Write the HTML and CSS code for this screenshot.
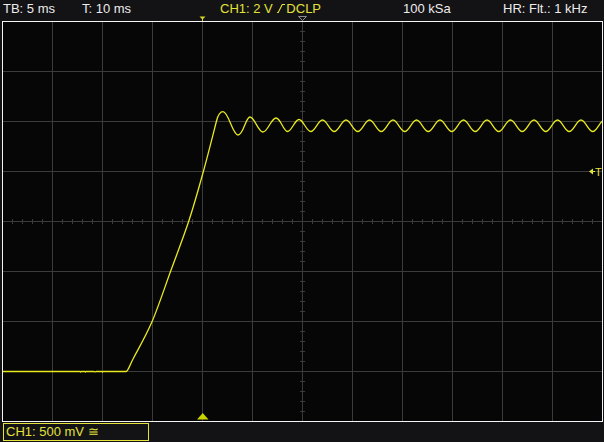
FILE: index.html
```html
<!DOCTYPE html>
<html lang="en">
<head>
<meta charset="utf-8">
<title>Scope</title>
<link rel="stylesheet" href="styles.css">
</head>
<body>
<div class="scope">
  <header class="status">
    <span class="field">TB: 5 ms</span>
    <span class="field">T: 10 ms</span>
    <span class="field ch">CH1: 2 V <svg class="edge" width="8" height="10" viewBox="0 0 8 10"><path d="M0 8.5H1.2L5.3 0.5H8" /></svg>DCLP</span>
    <span class="field">100 kSa</span>
    <span class="field">HR: Flt.: 1 kHz</span>
    <svg class="markers" width="604" height="8" viewBox="0 14 604 8">
      <path class="trig-pos" d="M199.5 16.5H205.5L202.5 19.5Z M202 19h1v2h-1Z" />
      <path class="ref-pos" d="M298.5 16.5H306.5L302.5 20.5Z" />
    </svg>
  </header>

  <svg class="screen" width="601" height="401" viewBox="2 21 601 401">
    <defs>
      <pattern id="grid" patternUnits="userSpaceOnUse" x="2" y="21" width="50" height="50">
        <rect x="0" y="0" width="1" height="50" />
        <rect x="0" y="0" width="50" height="1" />
      </pattern>
      <pattern id="tick-h" patternUnits="userSpaceOnUse" x="2" y="219" width="10" height="5">
        <rect x="0" y="0" width="1" height="5" />
      </pattern>
      <pattern id="tick-v" patternUnits="userSpaceOnUse" x="300" y="21" width="5" height="10">
        <rect x="0" y="0" width="5" height="1" />
      </pattern>
      <clipPath id="inner"><rect x="3" y="22" width="599" height="399" /></clipPath>
    </defs>

    <rect class="bg" x="2" y="21" width="601" height="401" />
    <rect class="grid" x="3" y="22" width="599" height="399" fill="url(#grid)" />
    <rect class="grid" x="3" y="219" width="599" height="5" fill="url(#tick-h)" />
    <rect class="grid" x="300" y="22" width="5" height="399" fill="url(#tick-v)" />

    <g clip-path="url(#inner)">
      <path class="trace" d="M2 371.5H80L80.5 372L81 371.5H85L85.5 372L86 371.5H94L95 372L96 371.5H102L102.5 372L103 371.5H126
        C128 371.5 128.9 366.9 133.3 358.5
        C137.7 350.1 146.1 335.6 152.3 321
        C158.5 306.4 164.6 287.7 170.7 271
        C176.8 254.3 183.3 237.7 188.8 221
        C194.3 204.3 198.9 187.7 203.5 171
        C208.1 154.3 212.2 137.8 216.5 121
        C218.5 113.2 220.5 111.7 223 111.7
        C228.5 111.7 232.5 135 238 135
        S245.6 117 250 117
        S258.3 132 263 132
        S271.3 118 276 118
        S283.3 131.5 287.5 131.5
        S294.8 119.5 299 119.5
        S306.5 131.5 310.75 131.5
        S318.2 120 322.5 120
        S330 131.5 334.25 131.5
        S341.7 120 346 120
        S353.5 131.5 357.75 131.5
        S365.2 120 369.5 120
        S377 131.5 381.25 131.5
        S388.7 120 393 120
        S400.5 131.5 404.75 131.5
        S412.2 120 416.5 120
        S424 131.5 428.25 131.5
        S435.7 120 440 120
        S447.5 131.5 451.75 131.5
        S459.2 120 463.5 120
        S471 131.5 475.25 131.5
        S482.7 120 487 120
        S494.5 131.5 498.75 131.5
        S506.2 120 510.5 120
        S518 131.5 522.25 131.5
        S529.7 120 534 120
        S541.5 131.5 545.75 131.5
        S553.2 120 557.5 120
        S565 131.5 569.25 131.5
        S576.7 120 581 120
        S588.5 131.5 592.75 131.5
        S600.2 120 604.5 120" />
    </g>

    <!-- trigger level marker on the right edge -->
    <path class="level" d="M589 171.5L593 168.5V174.5Z M593 171h2v1h-2Z" />
    <text class="level-label" x="595" y="175.5">T</text>

    <!-- trigger position marker at the bottom -->
    <path class="pos" d="M197 419.5H208.5L202.75 413Z" />

    <rect class="frame" x="2.5" y="21.5" width="600" height="400" />
  </svg>

  <footer class="channels">
    <span class="ch-box">CH1: 500 mV ≅</span>
  </footer>
</div>
</body>
</html>
```

FILE: styles.css
```css
html, body {
  margin: 0;
  padding: 0;
}

body {
  background: #131215;
  width: 604px;
  height: 442px;
  overflow: hidden;
  font-family: "Liberation Sans", Arial, sans-serif;
}

.scope {
  width: 604px;
  height: 442px;
  display: flex;
  flex-direction: column;
}

/* top status line */
.status {
  position: relative;
  height: 21px;
  display: grid;
  grid-template-columns: 79px 138px 183px 100px 1fr;
  padding-left: 3px;
  font-size: 13px;
  line-height: 17px;
  color: #ececec;
  white-space: nowrap;
}

.field {
  display: block;
}

.ch {
  color: #e3e33a;
}

.edge {
  display: inline-block;
  vertical-align: -1px;
  margin: 0 1px 0 1px;
}

.edge path {
  fill: none;
  stroke: #e3e33a;
  stroke-width: 1.1;
}

.markers {
  position: absolute;
  left: 0;
  top: 14px;
}

.trig-pos {
  fill: #d6d928;
}

.ref-pos {
  fill: none;
  stroke: #8c8c8c;
  stroke-width: 1;
}

/* measurement screen */
.screen {
  display: block;
  margin-left: 2px;
}

.bg {
  fill: #060606;
}

.grid {
  shape-rendering: crispEdges;
}

#grid rect,
#tick-h rect,
#tick-v rect {
  fill: #3b3b3b;
  shape-rendering: crispEdges;
}

.frame {
  fill: none;
  stroke: #f4f4f4;
  stroke-width: 1;
  shape-rendering: crispEdges;
}

.trace {
  fill: none;
  stroke: #e9e91f;
  stroke-width: 1.3;
  stroke-linejoin: round;
}

.level {
  fill: #e3e33a;
}

.level-label {
  fill: #e3e33a;
  font-family: "Liberation Sans", Arial, sans-serif;
  font-size: 11px;
}

.pos {
  fill: #cad400;
}

/* channel bar */
.channels {
  flex: 1;
  padding: 1px 0 0 3px;
}

.ch-box {
  display: block;
  box-sizing: border-box;
  width: 146px;
  height: 18px;
  border: 1px solid #e3e33a;
  padding-left: 2px;
  font-size: 13px;
  line-height: 16px;
  color: #e3e33a;
  white-space: nowrap;
}
```
